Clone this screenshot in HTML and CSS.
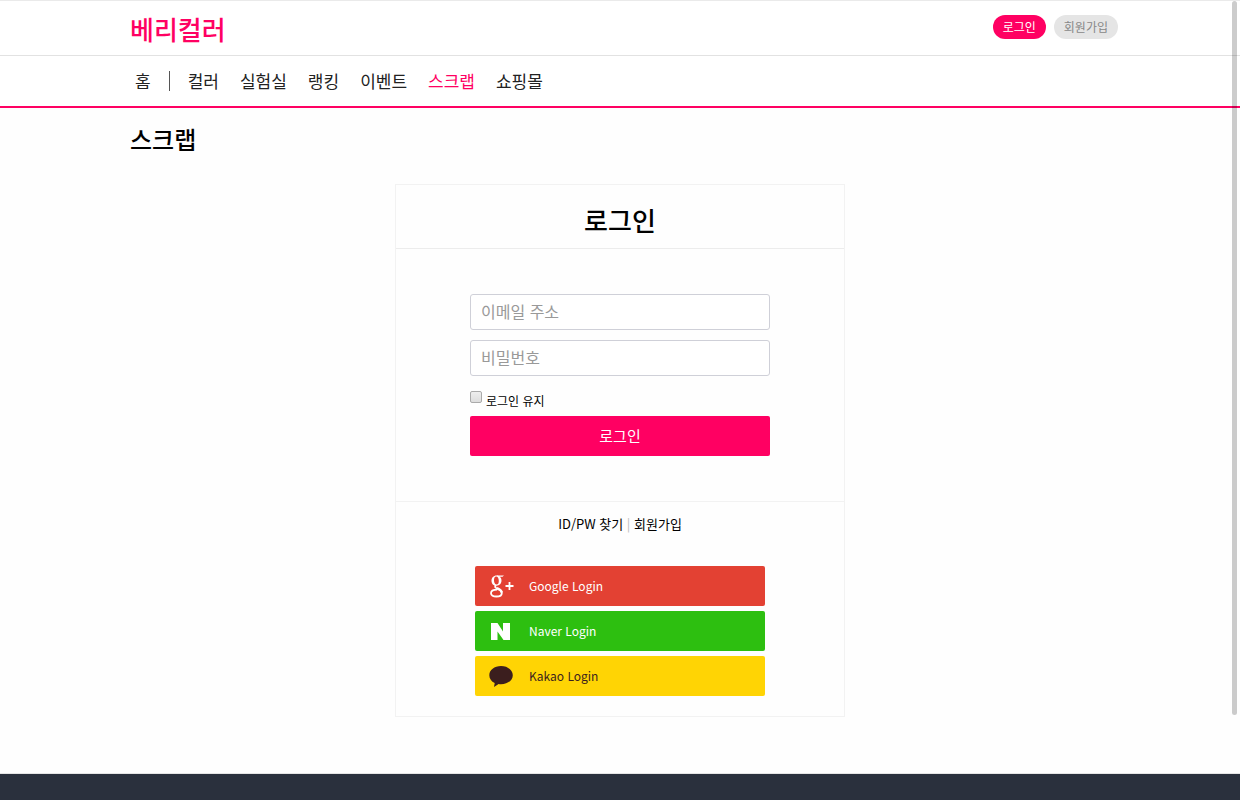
FILE: index.html
```html
<!DOCTYPE html>
<html lang="ko">
    <head>
        <meta charset="utf-8">
        <meta name="viewport" content="width=device-width, initial-scale=1">
        <title>베리컬러</title>
        <link rel="stylesheet" href="styles.css">
    </head>
    <body>
        <header class="header">
            <div class="container">
                <h1 class="logo"><a href="#">베리컬러</a></h1>
                <div class="account">
                    <a class="pill active" href="#">로그인</a>
                    <a class="pill" href="#">회원가입</a>
                </div>
            </div>
        </header>

        <nav class="menu">
            <ul class="container">
                <li class="home"><a href="#">홈</a></li>
                <li><a href="#">컬러</a></li>
                <li><a href="#">실험실</a></li>
                <li><a href="#">랭킹</a></li>
                <li><a href="#">이벤트</a></li>
                <li><a class="active" href="#">스크랩</a></li>
                <li><a href="#">쇼핑몰</a></li>
            </ul>
        </nav>

        <main>
            <div class="container">
                <h2 class="pageTitle">스크랩</h2>
            </div>

            <section class="login">
                <h3 class="loginTitle">로그인</h3>
                <form class="loginForm">
                    <input type="text" class="field" placeholder="이메일 주소" aria-label="이메일 주소">
                    <input type="password" class="field" placeholder="비밀번호" aria-label="비밀번호">
                    <div class="keep">
                        <input type="checkbox" id="keepLogin">
                        <label for="keepLogin">로그인 유지</label>
                    </div>
                    <button type="submit" class="submit">로그인</button>
                </form>
                <div class="loginFooter">
                    <p class="links"><a href="#">ID/PW 찾기</a> <span>|</span> <a href="#">회원가입</a></p>
                    <a class="social google" href="#">
                        <svg width="26" height="26" viewBox="0 0 26 26" fill="none" stroke="#fff">
                            <path d="M7.500 2.500C4.500 2.500 2.500 4.800 2.500 7.800s2 5 5 5 5-2.300 5-5.200-2-5.100-5-5.100zM7.200 3.600c1.600 0 2.600 2 2.600 4.400 0 2.300-.700 3.600-2.200 3.600-1.600 0-2.600-2-2.600-4.300 0-2.200.700-3.700 2.200-3.700z" fill="#fff" fill-rule="evenodd" stroke="none"/>
                            <path d="M7.500 2.500H15l-1.500 1.300H9z" fill="#fff" stroke="none"/>
                            <path d="M7 12.300c-1.300 1-1 2 .200 2.800 2.200 1.300 5.600 2 5.600 4.800 0 2.300-2.200 3.600-5.400 3.600-3.300 0-5.400-1.200-5.400-3.300 0-2.300 2.500-3.500 6.200-3.500" stroke-width="1.800"/>
                            <path d="M8 15c3 1.500 4.500 2.500 4.800 4.500" stroke-width="2.500"/>
                            <path d="M20.500 9v8M16.500 13h8" stroke-width="1.800"/>
                        </svg>
                        Google Login
                    </a>
                    <a class="social naver" href="#">
                        <svg width="26" height="26" viewBox="0 0 26 26">
                            <path d="M2 5h6.500l5.500 8.500V5h7v17h-6.500L8.500 13.500V22H2z" fill="#fff"/>
                        </svg>
                        Naver Login
                    </a>
                    <a class="social kakao" href="#">
                        <svg width="26" height="26" viewBox="0 0 26 26">
                            <path d="M12 3C5.400 3 .300 7 .300 12.200c0 3.400 2.100 6.300 5.400 7.900L5 24l4.600-3c.800.100 1.600.200 2.400.200 6.600 0 11.800-3.900 11.800-9S18.600 3 12 3z" fill="#3b1e1e"/>
                        </svg>
                        Kakao Login
                    </a>
                </div>
            </section>
        </main>

        <footer class="footer"></footer>
        <div class="scrollThumb"></div>
    </body>
</html>
```
FILE: styles.css
```css
*{
    box-sizing:border-box;
}
body{
    display:flex;
    flex-direction:column;
    min-height:100vh;
    margin:0;
    background-color:#fefefe;
    color:#000;
    font-family:"Noto Sans CJK KR", sans-serif;
    font-size:13px;
    line-height:20px;
}
h1,h2,h3,p,ul{
    margin:0;
    padding:0;
}
a{
    color:inherit;
    text-decoration:none;
}
input,button{
    font-family:inherit;
}
.container{
    width:100%;
    max-width:980px;
    margin:0 auto;
}

/* top bar */
.header{
    background-color:#fff;
    border-top:1px solid #eaeaea;
    border-bottom:1px solid #e2e2e2;
}
.header .container{
    display:flex;
    justify-content:space-between;
    height:54px;
}
.logo{
    color:#ff0062;
    font-size:26px;
    font-weight:500;
    line-height:56px;
}
.account{
    display:flex;
    gap:8px;
    align-items:flex-start;
    margin-right:-8px;
    padding-top:14px;
}
.pill{
    padding:0 10px;
    border-radius:12px;
    background-color:#e5e5e5;
    color:#888;
    font-size:12px;
    line-height:24px;
}
.pill.active{
    background-color:#ff0062;
    color:#fff;
}

/* menu */
.menu{
    border-bottom:2px solid #ff0062;
    background-color:#fff;
}
.menu ul{
    display:flex;
    gap:21px;
    align-items:center;
    height:50px;
    padding-left:5px;
    list-style:none;
    color:#222;
    font-size:17px;
}
.menu .home{
    padding-right:18px;
    border-right:1px solid #555;
    margin-right:-3px;
}
.menu .active{
    color:#ff0062;
}
.pageTitle{
    padding:15px 0 29px;
    font-size:24px;
    font-weight:500;
    line-height:32px;
}

/* login box */
.login{
    max-width:450px;
    margin:0 auto 56px;
    border:1px solid #f2f2f2;
}
.loginTitle{
    padding:19px 0 12px;
    border-bottom:1px solid #ececec;
    font-size:26px;
    font-weight:500;
    line-height:32px;
    text-align:center;
}
.loginForm{
    display:flex;
    flex-direction:column;
    max-width:300px;
    margin:0 auto;
    padding:45px 0;
}
.field{
    height:36px;
    margin:0 0 10px;
    padding:0 10px 2px;
    border:1px solid #cfd0d8;
    border-radius:3px;
    background-color:#fff;
    font-size:16px;
}
.field::placeholder{
    color:#999;
}
.keep{
    display:flex;
    gap:4px;
    padding:5px 0;
    font-size:12px;
}
.keep input{
    appearance:none;
    width:12px;
    height:12px;
    margin:0;
    border:1px solid #aaa;
    border-radius:2px;
    background-image:linear-gradient(#eee, #ddd);
}
.keep input:checked{
    background-image:linear-gradient(#ff0062, #ff0062);
}
.submit{
    height:40px;
    padding:0 0 2px;
    border:0;
    border-radius:2px;
    background-color:#ff0062;
    color:#fff;
    font-size:15px;
}
.loginFooter{
    padding:12px 0 20px;
    border-top:1px solid #f2f2f2;
}
.links{
    margin-bottom:32px;
    text-align:center;
}
.links span{
    color:#bbb;
}
.social{
    display:flex;
    gap:14px;
    align-items:center;
    max-width:290px;
    height:40px;
    margin:5px auto 0;
    padding-left:14px;
    border-radius:2px;
    color:#fff;
    font-size:12px;
}
.google{
    background-color:#e34133;
}
.naver{
    background-color:#2dbf10;
}
.kakao{
    background-color:#ffd404;
    color:#3b1e1e;
}

.footer{
    flex:1;
    min-height:26px;
    border-top:1px solid #e5e5e5;
    background-color:#2a303d;
}

/* overlay scrollbar */
.scrollThumb{
    position:fixed;
    top:1px;
    right:3px;
    width:5px;
    height:calc(90vh - 6px);
    border-radius:3px;
    background-color:rgba(0,0,0,0.2);
}
```
